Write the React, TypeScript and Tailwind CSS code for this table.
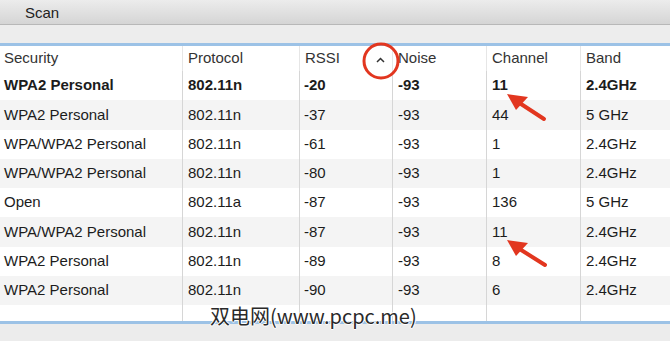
import React from 'react';

interface Network {
  security: string;
  protocol: string;
  rssi: string;
  noise: string;
  channel: string;
  band: string;
}

const networks: Network[] = [
  { security: 'WPA2 Personal', protocol: '802.11n', rssi: '-20', noise: '-93', channel: '11', band: '2.4GHz' },
  { security: 'WPA2 Personal', protocol: '802.11n', rssi: '-37', noise: '-93', channel: '44', band: '5 GHz' },
  { security: 'WPA/WPA2 Personal', protocol: '802.11n', rssi: '-61', noise: '-93', channel: '1', band: '2.4GHz' },
  { security: 'WPA/WPA2 Personal', protocol: '802.11n', rssi: '-80', noise: '-93', channel: '1', band: '2.4GHz' },
  { security: 'Open', protocol: '802.11a', rssi: '-87', noise: '-93', channel: '136', band: '5 GHz' },
  { security: 'WPA/WPA2 Personal', protocol: '802.11n', rssi: '-87', noise: '-93', channel: '11', band: '2.4GHz' },
  { security: 'WPA2 Personal', protocol: '802.11n', rssi: '-89', noise: '-93', channel: '8', band: '2.4GHz' },
  { security: 'WPA2 Personal', protocol: '802.11n', rssi: '-90', noise: '-93', channel: '6', band: '2.4GHz' },
];

const cols = 'grid grid-cols-[183px_117px_93px_94px_94px_1fr]';

const App: React.FC = () => {
  return (
    <div
      className="relative w-[670px] h-[341px] overflow-hidden bg-[#ececec] text-[#1c1c1c]"
      style={{ fontFamily: '"Liberation Sans", Arial, sans-serif' }}
    >
      {/* title bar */}
      <div className="h-[25px] flex items-center pl-[25px] pt-[2px] text-[15px] text-[#222] bg-gradient-to-b from-[#ececec] to-[#d5d5d5] border-b border-[#b8b8b8]">
        Scan
      </div>
      <div className="h-[18px] bg-[#ededed]" />
      <div className="h-[3px] bg-[#9cc2e6]" />

      {/* table */}
      <div className="bg-white h-[275px] flex flex-col text-[15px]">
        <div className={`${cols} h-[25px] text-[#333]`}>
          <div className="flex items-center pl-[4px] border-r border-[#e6e6e6]">Security</div>
          <div className="flex items-center pl-[5px] border-r border-[#e6e6e6]">Protocol</div>
          <div className="flex items-center justify-between pl-[5px] pr-[7px] border-r border-[#e6e6e6]">
            <span>RSSI</span>
            <svg width="9" height="6" viewBox="0 0 9 6" className="mt-[2px]">
              <path d="M1 5 L4.5 1.5 L8 5" fill="none" stroke="#333" strokeWidth="1.5" />
            </svg>
          </div>
          <div className="flex items-center pl-[5px] border-r border-[#e6e6e6]">Noise</div>
          <div className="flex items-center pl-[5px] border-r border-[#e6e6e6]">Channel</div>
          <div className="flex items-center pl-[5px]">Band</div>
        </div>
        {networks.map((n, i) => (
          <div
            key={i}
            className={`${cols} h-[29.25px] ${i % 2 === 1 ? 'bg-[#f4f4f4]' : 'bg-white'} ${i === 0 ? 'font-bold' : ''}`}
          >
            <div className="flex items-center pl-[4px] border-r border-[#d6d6d6]">{n.security}</div>
            <div className="flex items-center pl-[5px] border-r border-[#d6d6d6]">{n.protocol}</div>
            <div className="flex items-center pl-[4px] border-r border-[#d6d6d6]">{n.rssi}</div>
            <div className="flex items-center pl-[5px] border-r border-[#d6d6d6]">{n.noise}</div>
            <div className="flex items-center pl-[5px] border-r border-[#d6d6d6]">{n.channel}</div>
            <div className="flex items-center pl-[5px]">{n.band}</div>
          </div>
        ))}
        <div className={`${cols} flex-1`}>
          <div className="border-r border-[#d6d6d6]" />
          <div className="border-r border-[#d6d6d6]" />
          <div className="border-r border-[#d6d6d6]" />
          <div className="border-r border-[#d6d6d6]" />
          <div className="border-r border-[#d6d6d6]" />
          <div />
        </div>
      </div>
      <div className="h-[3px] bg-[#9cc2e6]" />

      {/* annotations */}
      <svg className="absolute inset-0 pointer-events-none" width="670" height="341" viewBox="0 0 670 341">
        <circle cx="381" cy="61" r="17" fill="none" stroke="#e2361f" strokeWidth="3" />
        <line x1="544" y1="119" x2="518" y2="102" stroke="#e2361f" strokeWidth="4" strokeLinecap="round" />
        <polygon points="507,94 528,97 516,110" fill="#e2361f" />
        <line x1="545" y1="265" x2="518" y2="248" stroke="#e2361f" strokeWidth="4" strokeLinecap="round" />
        <polygon points="507,240 528,243 516,256" fill="#e2361f" />
      </svg>

      <div
        className="absolute left-[210px] top-[305px] text-[20px] leading-[22px] text-[#2a2a2a]"
        style={{
          fontFamily: '"Noto Sans CJK SC", "Liberation Sans", sans-serif',
          textShadow: '1px 0 0 #fff, -1px 0 0 #fff, 0 1px 0 #fff, 0 -1px 0 #fff',
        }}
      >
        双电网(www.pcpc.me)
      </div>
    </div>
  );
};

export default App;
